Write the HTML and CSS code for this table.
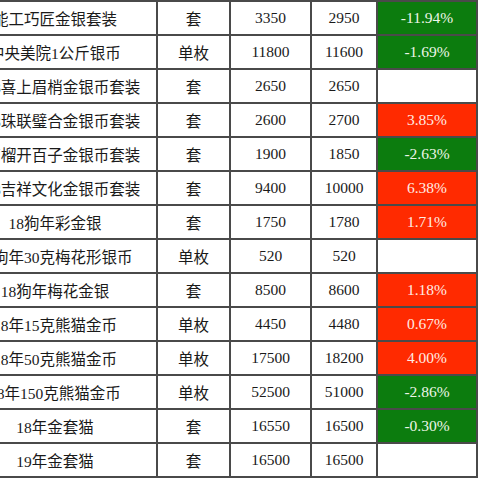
FILE: index.html
```html
<!DOCTYPE html>
<html lang="zh">
<head>
<meta charset="utf-8">
<title>金银币价格</title>
<link rel="stylesheet" href="styles.css">
</head>
<body>
<table class="prices">
  <colgroup>
    <col class="c-name"><col class="c-unit"><col class="c-old"><col class="c-new"><col class="c-chg">
  </colgroup>
  <tbody>
    <tr><td class="name">能工巧匠金银套装</td><td class="unit">套</td><td class="num">3350</td><td class="num">2950</td><td class="chg down">-11.94%</td></tr>
    <tr><td class="name">中央美院1公斤银币</td><td class="unit">单枚</td><td class="num">11800</td><td class="num">11600</td><td class="chg down">-1.69%</td></tr>
    <tr><td class="name">2018喜上眉梢金银币套装</td><td class="unit">套</td><td class="num">2650</td><td class="num">2650</td><td class="chg"></td></tr>
    <tr><td class="name">2018珠联璧合金银币套装</td><td class="unit">套</td><td class="num">2600</td><td class="num">2700</td><td class="chg up">3.85%</td></tr>
    <tr><td class="name">18石榴开百子金银币套装</td><td class="unit">套</td><td class="num">1900</td><td class="num">1850</td><td class="chg down">-2.63%</td></tr>
    <tr><td class="name">2018吉祥文化金银币套装</td><td class="unit">套</td><td class="num">9400</td><td class="num">10000</td><td class="chg up">6.38%</td></tr>
    <tr><td class="name">18狗年彩金银</td><td class="unit">套</td><td class="num">1750</td><td class="num">1780</td><td class="chg up">1.71%</td></tr>
    <tr><td class="name">18狗年30克梅花形银币</td><td class="unit">单枚</td><td class="num">520</td><td class="num">520</td><td class="chg"></td></tr>
    <tr><td class="name">18狗年梅花金银</td><td class="unit">套</td><td class="num">8500</td><td class="num">8600</td><td class="chg up">1.18%</td></tr>
    <tr><td class="name">18年15克熊猫金币</td><td class="unit">单枚</td><td class="num">4450</td><td class="num">4480</td><td class="chg up">0.67%</td></tr>
    <tr><td class="name">18年50克熊猫金币</td><td class="unit">单枚</td><td class="num">17500</td><td class="num">18200</td><td class="chg up">4.00%</td></tr>
    <tr><td class="name">18年150克熊猫金币</td><td class="unit">单枚</td><td class="num">52500</td><td class="num">51000</td><td class="chg down">-2.86%</td></tr>
    <tr><td class="name">18年金套猫</td><td class="unit">套</td><td class="num">16550</td><td class="num">16500</td><td class="chg down">-0.30%</td></tr>
    <tr><td class="name">19年金套猫</td><td class="unit">套</td><td class="num">16500</td><td class="num">16500</td><td class="chg"></td></tr>
  </tbody>
</table>
</body>
</html>
```

FILE: styles.css
```css
html, body {
  margin: 0;
  padding: 0;
  background: #ffffff;
  overflow: hidden;
}

.prices {
  border-collapse: collapse;
  table-layout: fixed;
  width: 524px;
  margin-left: -48px;
  margin-top: 0;
  font-family: "Liberation Serif", "Noto Sans CJK SC", serif;
  color: #1a1a1a;
}

.c-name { width: 204px; }
.c-unit { width: 73px; }
.c-old { width: 81px; }
.c-new { width: 66px; }
.c-chg { width: 100px; }

.prices td {
  border: 2px solid #4a4a4a;
  height: 32px;
  padding: 0;
  text-align: center;
  vertical-align: middle;
  white-space: nowrap;
  overflow: visible;
}

.name, .unit {
  font-size: 15.5px;
  padding-top: 2px;
}

.num, .chg {
  font-size: 15.5px;
  padding-top: 2px;
}

.chg.down {
  background: #0c7c0e;
  color: #eef6e8;
}

.chg.up {
  background: #ff2a00;
  color: #ffece4;
}
```
